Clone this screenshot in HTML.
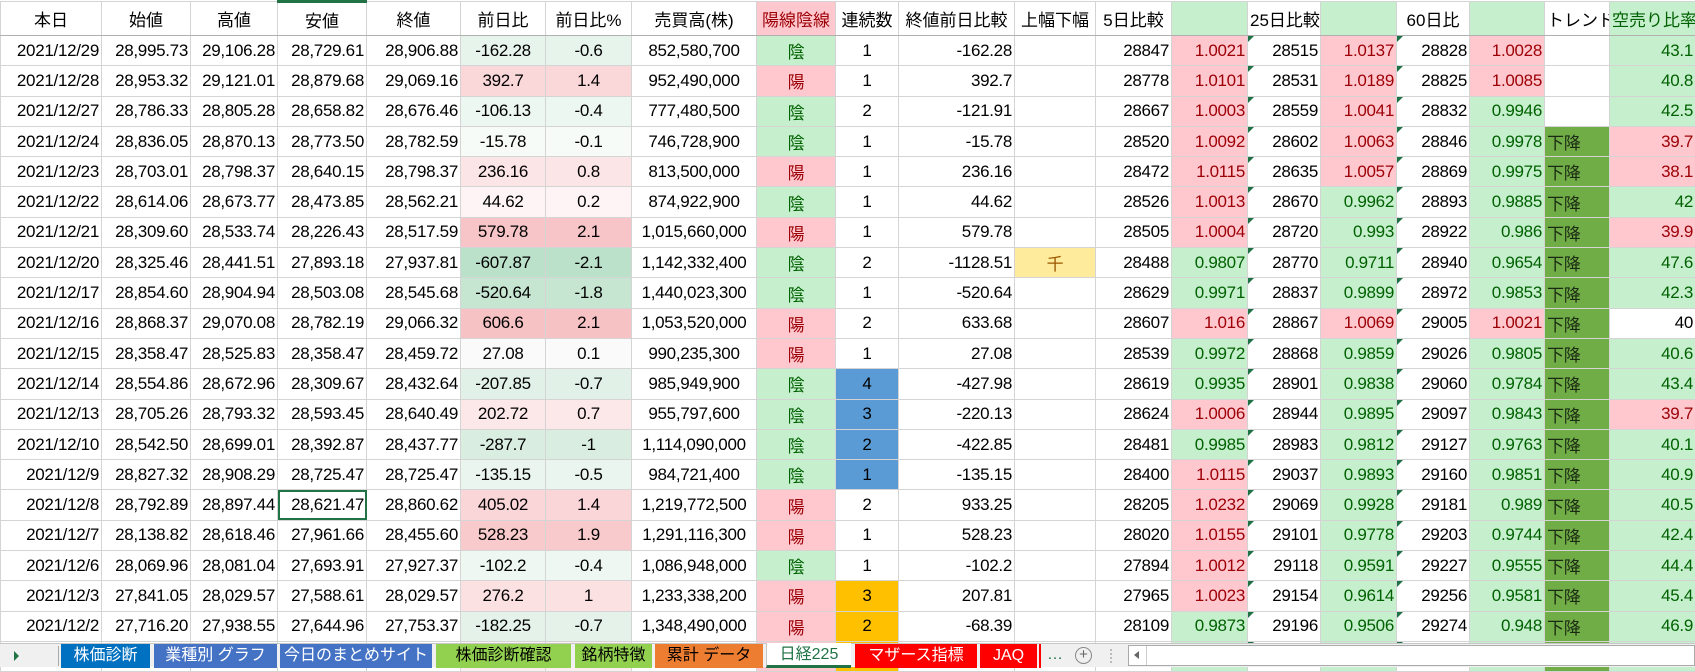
<!DOCTYPE html>
<html><head><meta charset="utf-8"><style>
*{margin:0;padding:0;box-sizing:border-box}
body{width:1695px;height:667px;overflow:hidden;background:#fff;font-family:"Liberation Sans","Noto Sans CJK JP",sans-serif;font-size:17px;color:#000;position:relative}
table{border-collapse:collapse;table-layout:fixed;width:1695px;position:absolute;left:0;top:0}
td{border:1px solid #d4d4d4;height:30.3px;padding:0 2px;text-align:right;white-space:nowrap;overflow:hidden;position:relative;font-size:17px;letter-spacing:-0.3px}
tr.h td{height:34px;text-align:center;border-bottom:1px solid #b0b0b0;font-size:17px;letter-spacing:0}
.c{text-align:center}.l{text-align:left}
.r{background:#ffc7ce;color:#9c0006}
.g{background:#c6efce;color:#006100}
.t{background:#70ad47;color:#1b2a12;text-align:left}
.b{background:#5b9bd5}.o{background:#ffc000}
.yw{background:#ffeb9c;color:#9c5700;text-align:center}
.tr::before{content:"";position:absolute;left:0;top:0;border-top:6px solid #1e7145;border-right:6px solid transparent}
.sel{outline:2px solid #217346;outline-offset:-2px}
#tabs{position:absolute;left:0;top:643px;width:1695px;height:24px;background:#f0f0f0;border-top:1px solid #c6c6c6;font-size:16px}
.tab{position:absolute;top:0;height:24px;line-height:23px;text-align:center;color:#fff;white-space:nowrap;overflow:hidden}
</style></head><body>
<table>
<colgroup><col style="width:101px"><col style="width:89px"><col style="width:87px"><col style="width:89px"><col style="width:94px"><col style="width:85px"><col style="width:86px"><col style="width:125px"><col style="width:79px"><col style="width:63px"><col style="width:116px"><col style="width:81px"><col style="width:76px"><col style="width:76px"><col style="width:73px"><col style="width:76px"><col style="width:73px"><col style="width:75px"><col style="width:65px"><col style="width:86px"></colgroup>
<tr class="h"><td>本日</td><td>始値</td><td>高値</td><td style="border-top:3px solid #217346">安値</td><td>終値</td><td>前日比</td><td>前日比%</td><td>売買高(株)</td><td class="r">陽線陰線</td><td>連続数</td><td class="l">終値前日比較</td><td>上幅下幅</td><td class="l">5日比較</td><td class="g"></td><td class="l">25日比較</td><td class="g"></td><td class="l">60日比</td><td class="g"></td><td class="l">トレンド</td><td class="g l">空売り比率</td></tr>
<tr><td>2021/12/29</td><td>28,995.73</td><td>29,106.28</td><td>28,729.61</td><td>28,906.88</td><td class="c" style="background:#e7f4ec">-162.28</td><td class="c" style="background:#e7f4ec">-0.6</td><td class="c">852,580,700</td><td class="g c">陰</td><td class="c">1</td><td>-162.28</td><td></td><td>28847</td><td class="r">1.0021</td><td class="tr">28515</td><td class="r">1.0137</td><td class="tr">28828</td><td class="r">1.0028</td><td></td><td class="g">43.1</td></tr>
<tr><td>2021/12/28</td><td>28,953.32</td><td>29,121.01</td><td>28,879.68</td><td>29,069.16</td><td class="c" style="background:#fad7d9">392.7</td><td class="c" style="background:#fad7d9">1.4</td><td class="c">952,490,000</td><td class="r c">陽</td><td class="c">1</td><td>392.7</td><td></td><td>28778</td><td class="r">1.0101</td><td class="tr">28531</td><td class="r">1.0189</td><td class="tr">28825</td><td class="r">1.0085</td><td></td><td class="g">40.8</td></tr>
<tr><td>2021/12/27</td><td>28,786.33</td><td>28,805.28</td><td>28,658.82</td><td>28,676.46</td><td class="c" style="background:#edf7f1">-106.13</td><td class="c" style="background:#edf7f1">-0.4</td><td class="c">777,480,500</td><td class="g c">陰</td><td class="c">2</td><td>-121.91</td><td></td><td>28667</td><td class="r">1.0003</td><td class="tr">28559</td><td class="r">1.0041</td><td class="tr">28832</td><td class="g">0.9946</td><td></td><td class="g">42.5</td></tr>
<tr><td>2021/12/24</td><td>28,836.05</td><td>28,870.13</td><td>28,773.50</td><td>28,782.59</td><td class="c" style="background:#f6fbf8">-15.78</td><td class="c" style="background:#f6fbf8">-0.1</td><td class="c">746,728,900</td><td class="g c">陰</td><td class="c">1</td><td>-15.78</td><td></td><td>28520</td><td class="r">1.0092</td><td class="tr">28602</td><td class="r">1.0063</td><td class="tr">28846</td><td class="g">0.9978</td><td class="t">下降</td><td class="r">39.7</td></tr>
<tr><td>2021/12/23</td><td>28,703.01</td><td>28,798.37</td><td>28,640.15</td><td>28,798.37</td><td class="c" style="background:#fce5e6">236.16</td><td class="c" style="background:#fce5e6">0.8</td><td class="c">813,500,000</td><td class="r c">陽</td><td class="c">1</td><td>236.16</td><td></td><td>28472</td><td class="r">1.0115</td><td class="tr">28635</td><td class="r">1.0057</td><td class="tr">28869</td><td class="g">0.9975</td><td class="t">下降</td><td class="r">38.1</td></tr>
<tr><td>2021/12/22</td><td>28,614.06</td><td>28,673.77</td><td>28,473.85</td><td>28,562.21</td><td class="c" style="background:#fef4f5">44.62</td><td class="c" style="background:#fef4f5">0.2</td><td class="c">874,922,900</td><td class="g c">陰</td><td class="c">1</td><td>44.62</td><td></td><td>28526</td><td class="r">1.0013</td><td class="tr">28670</td><td class="g">0.9962</td><td class="tr">28893</td><td class="g">0.9885</td><td class="t">下降</td><td class="g">42</td></tr>
<tr><td>2021/12/21</td><td>28,309.60</td><td>28,533.74</td><td>28,226.43</td><td>28,517.59</td><td class="c" style="background:#f7c5c7">579.78</td><td class="c" style="background:#f7c5c7">2.1</td><td class="c">1,015,660,000</td><td class="r c">陽</td><td class="c">1</td><td>579.78</td><td></td><td>28505</td><td class="r">1.0004</td><td class="tr">28720</td><td class="g">0.993</td><td class="tr">28922</td><td class="g">0.986</td><td class="t">下降</td><td class="r">39.9</td></tr>
<tr><td>2021/12/20</td><td>28,325.46</td><td>28,441.51</td><td>27,893.18</td><td>27,937.81</td><td class="c" style="background:#bce1ca">-607.87</td><td class="c" style="background:#bce1ca">-2.1</td><td class="c">1,142,332,400</td><td class="g c">陰</td><td class="c">2</td><td>-1128.51</td><td class="yw">千</td><td>28488</td><td class="g">0.9807</td><td class="tr">28770</td><td class="g">0.9711</td><td class="tr">28940</td><td class="g">0.9654</td><td class="t">下降</td><td class="g">47.6</td></tr>
<tr><td>2021/12/17</td><td>28,854.60</td><td>28,904.94</td><td>28,503.08</td><td>28,545.68</td><td class="c" style="background:#c6e6d2">-520.64</td><td class="c" style="background:#c6e6d2">-1.8</td><td class="c">1,440,023,300</td><td class="g c">陰</td><td class="c">1</td><td>-520.64</td><td></td><td>28629</td><td class="g">0.9971</td><td class="tr">28837</td><td class="g">0.9899</td><td class="tr">28972</td><td class="g">0.9853</td><td class="t">下降</td><td class="g">42.3</td></tr>
<tr><td>2021/12/16</td><td>28,868.37</td><td>29,070.08</td><td>28,782.19</td><td>29,066.32</td><td class="c" style="background:#f6c2c4">606.6</td><td class="c" style="background:#f6c2c4">2.1</td><td class="c">1,053,520,000</td><td class="r c">陽</td><td class="c">2</td><td>633.68</td><td></td><td>28607</td><td class="r">1.016</td><td class="tr">28867</td><td class="r">1.0069</td><td class="tr">29005</td><td class="r">1.0021</td><td class="t">下降</td><td>40</td></tr>
<tr><td>2021/12/15</td><td>28,358.47</td><td>28,525.83</td><td>28,358.47</td><td>28,459.72</td><td class="c" style="background:#fafafb">27.08</td><td class="c" style="background:#fafafb">0.1</td><td class="c">990,235,300</td><td class="r c">陽</td><td class="c">1</td><td>27.08</td><td></td><td>28539</td><td class="g">0.9972</td><td class="tr">28868</td><td class="g">0.9859</td><td class="tr">29026</td><td class="g">0.9805</td><td class="t">下降</td><td class="g">40.6</td></tr>
<tr><td>2021/12/14</td><td>28,554.86</td><td>28,672.96</td><td>28,309.67</td><td>28,432.64</td><td class="c" style="background:#e1f1e7">-207.85</td><td class="c" style="background:#e1f1e7">-0.7</td><td class="c">985,949,900</td><td class="g c">陰</td><td class="c b">4</td><td>-427.98</td><td></td><td>28619</td><td class="g">0.9935</td><td class="tr">28901</td><td class="g">0.9838</td><td class="tr">29060</td><td class="g">0.9784</td><td class="t">下降</td><td class="g">43.4</td></tr>
<tr><td>2021/12/13</td><td>28,705.26</td><td>28,793.32</td><td>28,593.45</td><td>28,640.49</td><td class="c" style="background:#fde8e9">202.72</td><td class="c" style="background:#fde8e9">0.7</td><td class="c">955,797,600</td><td class="g c">陰</td><td class="c b">3</td><td>-220.13</td><td></td><td>28624</td><td class="r">1.0006</td><td class="tr">28944</td><td class="g">0.9895</td><td class="tr">29097</td><td class="g">0.9843</td><td class="t">下降</td><td class="r">39.7</td></tr>
<tr><td>2021/12/10</td><td>28,542.50</td><td>28,699.01</td><td>28,392.87</td><td>28,437.77</td><td class="c" style="background:#d9eee1">-287.7</td><td class="c" style="background:#d9eee1">-1</td><td class="c">1,114,090,000</td><td class="g c">陰</td><td class="c b">2</td><td>-422.85</td><td></td><td>28481</td><td class="g">0.9985</td><td class="tr">28983</td><td class="g">0.9812</td><td class="tr">29127</td><td class="g">0.9763</td><td class="t">下降</td><td class="g">40.1</td></tr>
<tr><td>2021/12/9</td><td>28,827.32</td><td>28,908.29</td><td>28,725.47</td><td>28,725.47</td><td class="c" style="background:#e9f5ee">-135.15</td><td class="c" style="background:#e9f5ee">-0.5</td><td class="c">984,721,400</td><td class="g c">陰</td><td class="c b">1</td><td>-135.15</td><td></td><td>28400</td><td class="r">1.0115</td><td class="tr">29037</td><td class="g">0.9893</td><td class="tr">29160</td><td class="g">0.9851</td><td class="t">下降</td><td class="g">40.9</td></tr>
<tr><td>2021/12/8</td><td>28,792.89</td><td>28,897.44</td><td class="sel">28,621.47</td><td>28,860.62</td><td class="c" style="background:#fad6d8">405.02</td><td class="c" style="background:#fad6d8">1.4</td><td class="c">1,219,772,500</td><td class="r c">陽</td><td class="c">2</td><td>933.25</td><td></td><td>28205</td><td class="r">1.0232</td><td class="tr">29069</td><td class="g">0.9928</td><td class="tr">29181</td><td class="g">0.989</td><td class="t">下降</td><td class="g">40.5</td></tr>
<tr><td>2021/12/7</td><td>28,138.82</td><td>28,618.46</td><td>27,961.66</td><td>28,455.60</td><td class="c" style="background:#f8cacc">528.23</td><td class="c" style="background:#f8cacc">1.9</td><td class="c">1,291,116,300</td><td class="r c">陽</td><td class="c">1</td><td>528.23</td><td></td><td>28020</td><td class="r">1.0155</td><td class="tr">29101</td><td class="g">0.9778</td><td class="tr">29203</td><td class="g">0.9744</td><td class="t">下降</td><td class="g">42.4</td></tr>
<tr><td>2021/12/6</td><td>28,069.96</td><td>28,081.04</td><td>27,693.91</td><td>27,927.37</td><td class="c" style="background:#eef7f2">-102.2</td><td class="c" style="background:#eef7f2">-0.4</td><td class="c">1,086,948,000</td><td class="g c">陰</td><td class="c">1</td><td>-102.2</td><td></td><td>27894</td><td class="r">1.0012</td><td class="tr">29118</td><td class="g">0.9591</td><td class="tr">29227</td><td class="g">0.9555</td><td class="t">下降</td><td class="g">44.4</td></tr>
<tr><td>2021/12/3</td><td>27,841.05</td><td>28,029.57</td><td>27,588.61</td><td>28,029.57</td><td class="c" style="background:#fbe1e2">276.2</td><td class="c" style="background:#fbe1e2">1</td><td class="c">1,233,338,200</td><td class="r c">陽</td><td class="c o">3</td><td>207.81</td><td></td><td>27965</td><td class="r">1.0023</td><td class="tr">29154</td><td class="g">0.9614</td><td class="tr">29256</td><td class="g">0.9581</td><td class="t">下降</td><td class="g">45.4</td></tr>
<tr><td>2021/12/2</td><td>27,716.20</td><td>27,938.55</td><td>27,644.96</td><td>27,753.37</td><td class="c" style="background:#e4f2ea">-182.25</td><td class="c" style="background:#e4f2ea">-0.7</td><td class="c">1,348,490,000</td><td class="r c">陽</td><td class="c o">2</td><td>-68.39</td><td></td><td>28109</td><td class="g">0.9873</td><td class="tr">29196</td><td class="g">0.9506</td><td class="tr">29274</td><td class="g">0.948</td><td class="t">下降</td><td class="g">46.9</td></tr>
<tr><td>2021/12/1</td><td>27,822.76</td><td>28,196.96</td><td>27,584.61</td><td>27,935.62</td><td class="c" style="background:#fdeeef">118.38</td><td class="c" style="background:#fdeeef">0.4</td><td class="c">1,441,133,000</td><td class="r c">陽</td><td class="c o">1</td><td>118.38</td><td></td><td>28458</td><td class="g">0.9816</td><td class="tr">28351</td><td class="g">0.955</td><td class="tr">29299</td><td class="g">0.9538</td><td class="t">下降</td><td class="g">46.0</td></tr>
</table>
<div id="tabs">
<div style="position:absolute;left:14px;top:7px;border-left:5px solid #217346;border-top:5px solid transparent;border-bottom:5px solid transparent"></div>
<div style="position:absolute;left:58px;top:2px;width:1px;height:20px;background:#aaa"></div>
<div class="tab" style="left:61px;width:89px;background:#0070c0">株価診断</div>
<div class="tab" style="left:154px;width:123px;background:#4472c4">業種別 グラフ</div>
<div class="tab" style="left:280px;width:152px;background:#4472c4">今日のまとめサイト</div>
<div class="tab" style="left:436px;width:135px;background:#92d050;color:#000">株価診断確認</div>
<div class="tab" style="left:575px;width:77px;background:#92d050;color:#000">銘柄特徴</div>
<div class="tab" style="left:655px;width:108px;background:#ed7d31;color:#000">累計 データ</div>
<div class="tab" style="left:766px;width:85px;top:-1px;height:25px;background:#fff;color:#217346;border-bottom:3px solid #217346;border-left:1px solid #c6c6c6">日経225</div>
<div class="tab" style="left:855px;width:122px;background:#ff0000">マザース指標</div>
<div class="tab" style="left:980px;width:57px;background:#ff0000">JAQ</div>
<div style="position:absolute;left:1039px;top:0;width:2px;height:24px;background:#ff0000"></div>
<div style="position:absolute;left:1047px;top:0;line-height:22px;color:#217346">…</div>
<div style="position:absolute;left:1075px;top:3px;width:17px;height:17px;border:1px solid #888;border-radius:50%;text-align:center;line-height:14px;font-size:15px;color:#666">+</div>
<div style="position:absolute;left:1110px;top:5px;width:2px;height:14px;border-left:2px dotted #bbb"></div>
<div style="position:absolute;left:1128px;top:1px;width:567px;height:21px;background:#fff;border:1px solid #aaa"></div>
<div style="position:absolute;left:1134px;top:7px;border-right:5px solid #666;border-top:4px solid transparent;border-bottom:4px solid transparent"></div>
<div style="position:absolute;left:1146px;top:2px;width:1px;height:19px;background:#ccc"></div>
</div>
</body></html>
